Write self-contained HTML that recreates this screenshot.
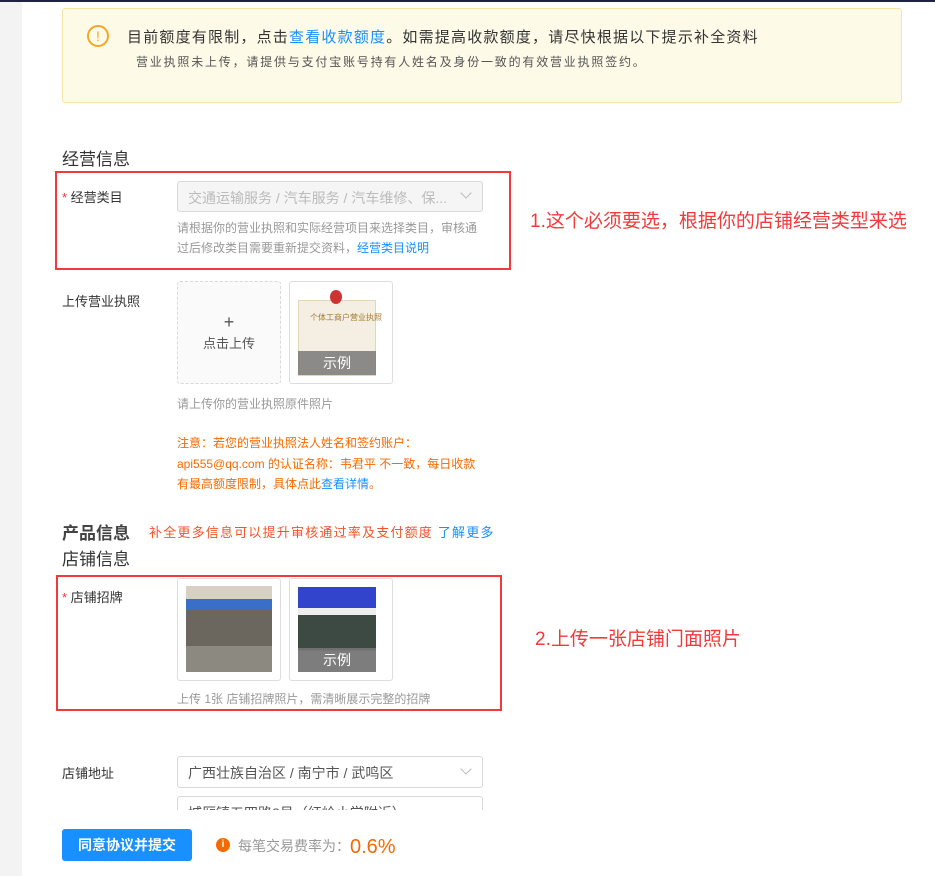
<!DOCTYPE html>
<html><head><meta charset="utf-8"><style>
*{margin:0;padding:0;box-sizing:border-box}
body{width:935px;height:876px;position:relative;overflow:hidden;background:#fff;font-family:"Liberation Sans","Noto Sans CJK SC",sans-serif;color:#333}
.a{position:absolute;white-space:nowrap}
.rb{position:absolute;border:2px solid #f23a3a}
.sel{position:absolute;border:1px solid #d9d9d9;border-radius:3px;font-size:14px;padding:6px 10px;color:#555}
.chev{position:absolute;right:12px;top:8px;width:8px;height:8px;border-right:1px solid #bbb;border-bottom:1px solid #bbb;transform:rotate(45deg)}
.box{position:absolute;width:104px;height:103px;border:1px solid #ddd;border-radius:3px;background:#fff}
.ov{position:absolute;left:8px;width:78px;height:24px;background:rgba(120,120,120,.85);color:#fff;font-size:14px;text-align:center;line-height:24px}
.h{font-size:12px;color:#999}
.or{font-size:12px;color:#f56a00}
</style></head><body>
<div class="a" style="left:0;top:0;width:22px;height:876px;background:#f3f3f3"></div>
<div class="a" style="left:0;top:0;width:935px;height:2px;background:#1d2340"></div>

<div class="a" style="left:62px;top:8px;width:840px;height:95px;background:#fefae8;border:1px solid #f7e4a6;border-radius:3px"></div>
<div class="a" style="left:87px;top:25px;width:22px;height:22px;border:2px solid #f5a623;border-radius:50%;color:#f5a623;font-size:14px;text-align:center;line-height:18px">!</div>
<div class="a" style="left:127px;top:26px;font-size:15px;letter-spacing:1.2px;color:#333">目前额度有限制，点击<span style="color:#1890ff">查看收款额度</span>。如需提高收款额度，请尽快根据以下提示补全资料</div>
<div class="a" style="left:136px;top:53px;font-size:12px;letter-spacing:1.8px;color:#555">营业执照未上传，请提供与支付宝账号持有人姓名及身份一致的有效营业执照签约。</div>

<div class="a" style="left:62px;top:145px;font-size:17px;color:#333">经营信息</div>
<div class="rb" style="left:55px;top:171px;width:456px;height:99px"></div>
<div class="a" style="left:62px;top:187px;font-size:13px"><span style="color:#f23a3a">*</span> 经营类目</div>
<div class="sel" style="left:177px;top:181px;width:306px;height:31px;background:#f5f5f5;color:#bbb">交通运输服务 / 汽车服务 / 汽车维修、保...<span class="chev" style="top:7px"></span></div>
<div class="a h" style="left:177px;top:218px;line-height:20px">请根据你的营业执照和实际经营项目来选择类目，审核通<br>过后修改类目需要重新提交资料，<span style="color:#1890ff">经营类目说明</span></div>
<div class="a" style="left:530px;top:206px;font-size:19px;color:#f23a3a">1.这个必须要选，根据你的店铺经营类型来选</div>

<div class="a" style="left:62px;top:291px;font-size:13px">上传营业执照</div>
<div class="box" style="left:177px;top:281px;border:1px dashed #d9d9d9;background:#fafafa;text-align:center;font-size:13px;color:#555;padding-top:30px;line-height:20px"><span style="font-size:18px">+</span><br>点击上传</div>
<div class="box" style="left:289px;top:281px">
 <div class="a" style="left:8px;top:18px;width:78px;height:76px;background:#f4efe2;border:1px solid #e0d6b8"></div>
 <div class="a" style="left:40px;top:8px;width:12px;height:14px;background:#c33;border-radius:50%"></div>
 <div class="a" style="left:20px;top:30px;font-size:8px;color:#a57a30">个体工商户营业执照</div>
 <div class="ov" style="top:69px">示例</div>
</div>
<div class="a h" style="left:177px;top:395px">请上传你的营业执照原件照片</div>
<div class="a or" style="left:177px;top:433px;line-height:20.5px">注意：若您的营业执照法人姓名和签约账户：<br>api555@qq.com 的认证名称：韦君平 不一致，每日收款<br>有最高额度限制，具体点此<span style="color:#1890ff">查看详情</span>。</div>

<div class="a" style="left:62px;top:519px;font-size:17px;font-weight:bold;color:#444">产品信息</div>
<div class="a" style="left:149px;top:522px;font-size:13px;letter-spacing:1.2px;color:#f5522d">补全更多信息可以提升审核通过率及支付额度 <span style="color:#1890ff">了解更多</span></div>
<div class="a" style="left:62px;top:545px;font-size:17px;color:#333">店铺信息</div>

<div class="rb" style="left:56px;top:575px;width:446px;height:136px"></div>
<div class="a" style="left:62px;top:587px;font-size:13px"><span style="color:#f23a3a">*</span> 店铺招牌</div>
<div class="box" style="left:177px;top:578px">
 <div class="a" style="left:8px;top:7px;width:86px;height:86px;background:linear-gradient(#d8d0c4 0 15%,#3a6fc8 15% 28%,#6b665e 28% 70%,#8c8a80 70%)"></div>
</div>
<div class="box" style="left:289px;top:578px">
 <div class="a" style="left:8px;top:8px;width:78px;height:85px;background:linear-gradient(#3344cc 0 25%,#eee 25% 33%,#3d4a44 33% 75%,#999 75%)"></div>
 <div class="ov" style="top:69px">示例</div>
</div>
<div class="a h" style="left:177px;top:690px">上传 1张 店铺招牌照片，需清晰展示完整的招牌</div>
<div class="a" style="left:535px;top:624px;font-size:19px;color:#f23a3a">2.上传一张店铺门面照片</div>

<div class="a" style="left:62px;top:763px;font-size:13px">店铺地址</div>
<div class="sel" style="left:177px;top:756px;width:306px;height:32px;background:#fff">广西壮族自治区 / 南宁市 / 武鸣区<span class="chev"></span></div>
<div class="a" style="left:177px;top:796px;width:306px;height:14px;overflow:hidden;border:1px solid #d9d9d9;border-bottom:none;border-radius:3px 3px 0 0;font-size:14px;color:#555;padding:6px 10px">城厢镇五四路8号（红岭小学附近）</div>

<div class="a" style="left:62px;top:829px;width:130px;height:32px;background:#1890ff;border-radius:3px;color:#fff;font-size:14px;font-weight:bold;text-align:center;line-height:32px">同意协议并提交</div>
<div class="a" style="left:216px;top:838px;width:14px;height:14px;border-radius:50%;background:#f56a00;color:#fff;font-size:10px;text-align:center;line-height:14px;font-weight:bold">i</div>
<div class="a" style="left:238px;top:836px;font-size:14px;color:#999">每笔交易费率为：<span style="font-size:20px;color:#f56a00;vertical-align:-2px">0.6%</span></div>
</body></html>
